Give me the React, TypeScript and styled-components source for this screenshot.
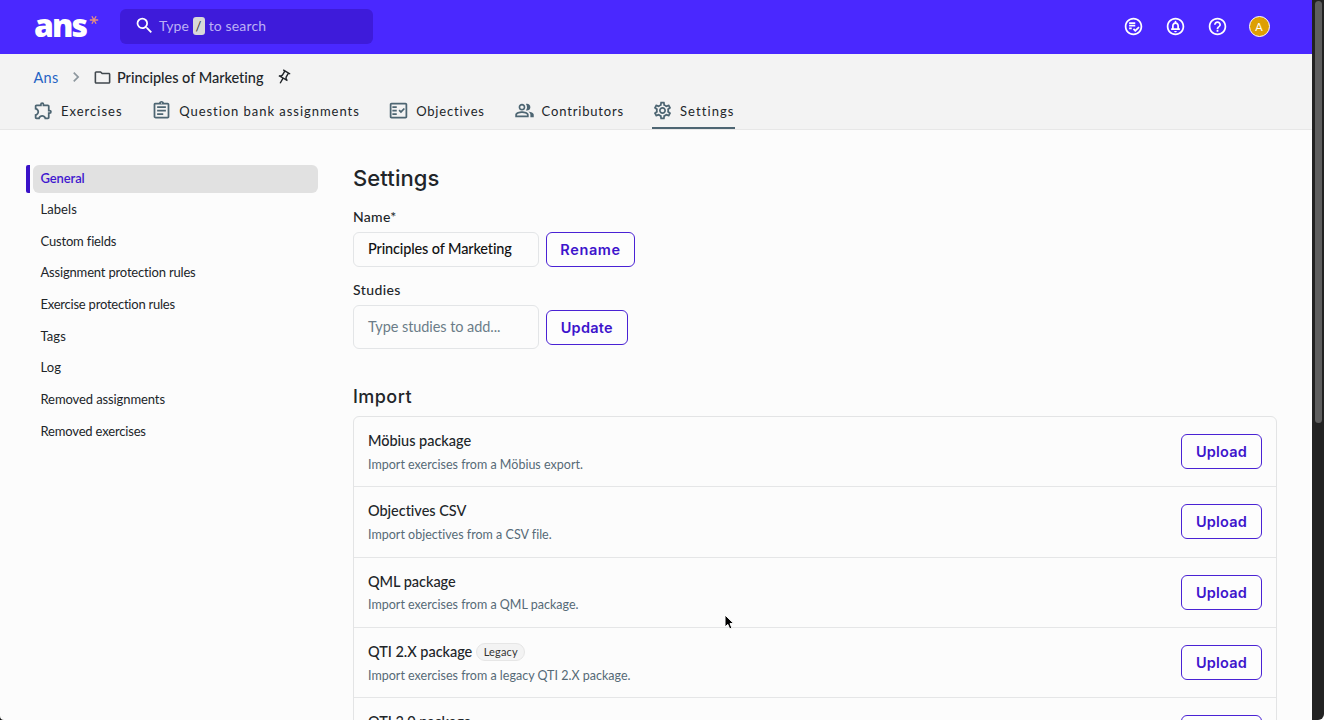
import styled, { createGlobalStyle } from 'styled-components';
import {
  MdSearch,
  MdOutlineFolder,
  MdChevronRight,
  MdOutlinePushPin,
  MdOutlineExtension,
  MdOutlineAssignment,
  MdOutlineFactCheck,
  MdOutlineSettings,
  MdOutlinePlaylistAddCheckCircle,
  MdOutlineCircleNotifications,
  MdHelpOutline,
} from 'react-icons/md';

const bodyFont = "Lato, 'Noto Sans', sans-serif";
const headingFont = "Inter, 'Liberation Sans', sans-serif";

const GlobalStyle = createGlobalStyle`
  *, *::before, *::after { box-sizing: border-box; }
  body {
    margin: 0;
    overflow: hidden;
    background: #fcfcfc;
    color: #212529;
    font-family: ${bodyFont};
    font-variant-ligatures: none;
    -webkit-font-smoothing: antialiased;
  }
  a { color: inherit; text-decoration: none; }
  h1, h2, h3, p { margin: 0; }
`;

const Window = styled.div`
  display: flex;
  position: relative;
  width: 1324px;
  height: 720px;
  overflow: hidden;
`;

const Page = styled.div`
  width: 1312px;
  height: 720px;
  overflow: hidden;
`;

const Scrollbar = styled.div`
  width: 12px;
  padding: 1px 2px 0 3px;
  background: #222;
  border-bottom-right-radius: 6px;
`;

const ScrollThumb = styled.div`
  height: 422px;
  border-radius: 4px;
  background: #5e5e5e;
`;

const TopBar = styled.header`
  display: flex;
  align-items: center;
  height: 54px;
  padding: 0 42.5px 1px 34px;
  background: #4a28ff;
`;

const Logo = styled.a`
  display: flex;
  width: 86px;
  height: 36px;
  color: #fff;
  font-family: 'Noto Sans', sans-serif;
  font-size: 32px;
  font-weight: 900;
  line-height: 31px;
  letter-spacing: -2px;
`;

const LogoStar = styled.svg`
  width: 10px;
  height: 10px;
  margin: 6px 0 0 3px;
  flex: none;
`;

const SearchBox = styled.div`
  display: flex;
  align-items: center;
  width: 253px;
  height: 35px;
  padding: 0 0 2px 14px;
  border-radius: 6px;
  background: #3e1bda;
  color: #bcb0f5;
  font-size: 14px;
  letter-spacing: 0.15px;

  svg { margin-right: 4px; color: #fff; }
`;

const SlashKey = styled.kbd`
  display: flex;
  align-items: center;
  justify-content: center;
  width: 12px;
  height: 18px;
  margin: 0 4px 0 3.5px;
  border-radius: 3px;
  background: #d8d8d8;
  color: #333;
  font-family: ${bodyFont};
  font-size: 13px;
`;

const Actions = styled.div`
  display: flex;
  align-items: center;
  gap: 21px;
  margin-left: auto;
  color: #fff;
`;

const Avatar = styled.span`
  display: flex;
  align-items: center;
  justify-content: center;
  width: 21px;
  height: 21px;
  border: 1.5px solid #fff;
  border-radius: 50%;
  background: #dd9f04;
  color: #fff;
  font-size: 11px;
`;

const SubHeader = styled.div`
  height: 76px;
  padding: 12px 33px 0;
  border-bottom: 1px solid #e7e7e7;
  background: #f3f3f3;
`;

const Breadcrumb = styled.div`
  display: flex;
  align-items: center;
  height: 22px;
  font-size: 14.5px;

  a { color: #2563c4; width: 33px; padding-left: 0.5px; letter-spacing: 0.25px; }
`;

const Crumb = styled.span`
  width: 158px;
  margin-left: 5px;
  font-weight: 500;
  letter-spacing: -0.02px;
`;

const Chevron = styled(MdChevronRight)`
  margin-right: 7px;
  color: #8d979e;
`;

const Folder = styled(MdOutlineFolder)`
  color: #40474d;
`;

const Pin = styled(MdOutlinePushPin)`
  transform: rotate(30deg);
`;

const Tabs = styled.nav`
  display: flex;
  height: 41px;
  gap: 29.4px;
`;

const Tab = styled.a<{ $active?: boolean; $track: number; $width: number }>`
  display: flex;
  align-items: center;
  gap: 7px;
  width: ${(p) => p.$width}px;
  padding-top: 6px;
  border-bottom: 2px solid ${(p) => (p.$active ? '#4d6572' : 'transparent')};
  font-size: 13px;
  white-space: nowrap;
  letter-spacing: ${(p) => p.$track}px;

  svg { flex: none; color: #4d6572; }
`;

const Content = styled.div`
  display: flex;
  padding: 34.5px 35px 0 26px;
`;

const SideNav = styled.nav`
  display: flex;
  flex-direction: column;
  gap: 3.65px;
  width: 327px;
`;

const NavRow = styled.div<{ $active?: boolean }>`
  display: flex;
  gap: 3px;
  height: 28px;

  &::before {
    content: '';
    width: 4px;
    border-radius: 2px 0 0 2px;
    background: ${(p) => (p.$active ? '#3a12c8' : 'transparent')};
  }
`;

const NavLink = styled.a<{ $active?: boolean; $track: number }>`
  width: 285px;
  padding-left: 7.5px;
  border-radius: 6px;
  background: ${(p) => (p.$active ? '#e1e1e1' : 'transparent')};
  color: ${(p) => (p.$active ? '#3f17cf' : '#212529')};
  font-size: 13px;
  font-weight: ${(p) => (p.$active ? 600 : 400)};
  line-height: 27.4px;
  letter-spacing: ${(p) => p.$track}px;
`;

const Main = styled.main`
  width: 924px;
`;

const Title = styled.h1`
  height: 43px;
  font-family: ${headingFont};
  font-size: 22px;
  font-weight: 500;
  line-height: 27px;
  letter-spacing: 0.1px;
`;

const Label = styled.label<{ $track: number }>`
  display: block;
  height: 24px;
  font-size: 14px;
  font-weight: 500;
  line-height: 18px;
  letter-spacing: ${(p) => p.$track}px;
`;

const FieldRow = styled.div<{ $gapBelow: number }>`
  display: flex;
  align-items: center;
  gap: 7px;
  margin-bottom: ${(p) => p.$gapBelow}px;
`;

const Field = styled.div<{ $height: number; $empty?: boolean }>`
  display: flex;
  align-items: center;
  width: 186px;
  height: ${(p) => p.$height}px;
  padding-left: 14px;
  border: 1px solid #e3e5e7;
  border-radius: 6px;
  color: ${(p) => (p.$empty ? '#6b7c88' : '#111')};
  font-size: 14.5px;
  font-weight: ${(p) => (p.$empty ? 400 : 500)};
  line-height: 16px;
  letter-spacing: ${(p) => (p.$empty ? -0.07 : -0.14)}px;
`;

const Button = styled.button<{ $width: number; $track: number }>`
  width: ${(p) => p.$width}px;
  height: 35px;
  padding: 0;
  border: 1px solid #4a22d4;
  border-radius: 6px;
  background: #fdfdfd;
  color: #3d14cc;
  font-family: ${headingFont};
  font-size: 14.5px;
  font-weight: 600;
  letter-spacing: ${(p) => p.$track}px;
`;

const SectionTitle = styled.h2`
  height: 32px;
  font-family: ${headingFont};
  font-size: 18px;
  font-weight: 500;
  line-height: 25px;
  letter-spacing: 0.45px;
`;

const Card = styled.section`
  border: 1px solid #e3e4e5;
  border-radius: 6px 6px 0 0;
`;

const PackageRow = styled.article`
  display: flex;
  align-items: center;
  justify-content: space-between;
  height: 70.3px;
  padding: 0 14px;
  border-bottom: 1px solid #e5e6e7;
`;

const PackageInfo = styled.div`
  padding-top: 2px;
`;

const PackageName = styled.h3`
  display: flex;
  align-items: center;
  gap: 4px;
  height: 22.4px;
  font-size: 14.5px;
  font-weight: 500;
  letter-spacing: -0.03px;
`;

const PackageNote = styled.p`
  height: 24px;
  color: #566a77;
  font-size: 12.5px;
  line-height: 25px;
  letter-spacing: 0.01px;
`;

const Badge = styled.span`
  display: flex;
  align-items: center;
  justify-content: center;
  width: 49px;
  height: 18px;
  border: 1px solid #e6e6e6;
  border-radius: 9px;
  background: #f3f3f3;
  color: #333;
  font-size: 11px;
  font-weight: 400;
  letter-spacing: 0.18px;
`;

const Pointer = styled.svg`
  position: absolute;
  left: 723px;
  top: 613px;
  width: 12px;
  height: 18px;
`;

const WindowCorner = styled.svg`
  position: absolute;
  left: 0;
  bottom: 0;
  width: 4px;
  height: 4px;
`;

function PeopleIcon({ size }: { size: number }) {
  return (
    <svg width={size} height={size} viewBox="-0.5 -0.5 25 25" fill="currentColor">
      <path d="M16.67 13.13C18.04 14.06 19 15.32 19 17v3h4v-3c0-2.18-3.57-3.47-6.33-3.87z" />
      <path d="M15 12c2.21 0 4-1.79 4-4s-1.79-4-4-4c-.47 0-.91.1-1.33.24C14.5 5.27 15 6.58 15 8s-.5 2.73-1.33 3.76c.42.14.86.24 1.33.24z" />
      <path d="M9 12c2.21 0 4-1.79 4-4s-1.79-4-4-4-4 1.79-4 4 1.79 4 4 4zm0-6c1.1 0 2 .9 2 2s-.9 2-2 2-2-.9-2-2 .9-2 2-2z" />
      <path d="M9 13c-2.67 0-8 1.34-8 4v3h16v-3c0-2.66-5.33-4-8-4zm6 5H3v-.99C3.2 16.29 6.3 15 9 15s5.8 1.29 6 2v1z" />
    </svg>
  );
}

const tabs = [
  { label: 'Exercises', Icon: MdOutlineExtension, track: 1.02, width: 88.8 },
  { label: 'Question bank assignments', Icon: MdOutlineAssignment, track: 0.96, width: 207.6 },
  { label: 'Objectives', Icon: MdOutlineFactCheck, track: 0.8, width: 96 },
  { label: 'Contributors', Icon: PeopleIcon, track: 0.83, width: 109 },
  { label: 'Settings', Icon: MdOutlineSettings, track: 1.08, width: 83 },
];

const sections = [
  { label: 'General', track: -0.1 },
  { label: 'Labels', track: 0.06 },
  { label: 'Custom fields', track: -0.17 },
  { label: 'Assignment protection rules', track: -0.18 },
  { label: 'Exercise protection rules', track: -0.23 },
  { label: 'Tags', track: 0.1 },
  { label: 'Log', track: 0.1 },
  { label: 'Removed assignments', track: -0.1 },
  { label: 'Removed exercises', track: -0.17 },
];

const packages = [
  { name: 'Möbius package', note: 'Import exercises from a Möbius export.' },
  { name: 'Objectives CSV', note: 'Import objectives from a CSV file.' },
  { name: 'QML package', note: 'Import exercises from a QML package.' },
  { name: 'QTI 2.X package', note: 'Import exercises from a legacy QTI 2.X package.', badge: 'Legacy' },
  { name: 'QTI 3.0 package', note: '' },
];

export default function App() {
  return (
    <Window>
      <GlobalStyle />
      <Page>
        <TopBar>
          <Logo>
            ans
            <LogoStar viewBox="0 0 10 10" stroke="#e58f80" strokeWidth="1.3" fill="none">
              <path d="M.8 5h8.4M2.9 1.2l4.2 7.6M7.1 1.2L2.9 8.8" />
            </LogoStar>
          </Logo>
          <SearchBox>
            <MdSearch size={21} />
            Type
            <SlashKey>/</SlashKey>
            to search
          </SearchBox>
          <Actions>
            <MdOutlinePlaylistAddCheckCircle size={21} />
            <MdOutlineCircleNotifications size={21} />
            <MdHelpOutline size={21} />
            <Avatar>A</Avatar>
          </Actions>
        </TopBar>
        <SubHeader>
          <Breadcrumb>
            <a>Ans</a>
            <Chevron size={20} />
            <Folder size={19} />
            <Crumb>Principles of Marketing</Crumb>
            <Pin size={17} />
          </Breadcrumb>
          <Tabs>
            {tabs.map(({ label, Icon, track, width }) => (
              <Tab key={label} $active={label === 'Settings'} $track={track} $width={width}>
                <Icon size={21} />
                {label}
              </Tab>
            ))}
          </Tabs>
        </SubHeader>
        <Content>
          <SideNav>
            {sections.map(({ label, track }) => (
              <NavRow key={label} $active={label === 'General'}>
                <NavLink $active={label === 'General'} $track={track}>{label}</NavLink>
              </NavRow>
            ))}
          </SideNav>
          <Main>
            <Title>Settings</Title>
            <Label $track={0.3}>Name*</Label>
            <FieldRow $gapBelow={14.5}>
              <Field $height={35}>Principles of Marketing</Field>
              <Button $width={89} $track={0.6}>Rename</Button>
            </FieldRow>
            <Label $track={0.4}>Studies</Label>
            <FieldRow $gapBelow={35}>
              <Field $height={44} $empty>Type studies to add...</Field>
              <Button $width={81.5} $track={0.25}>Update</Button>
            </FieldRow>
            <SectionTitle>Import</SectionTitle>
            <Card>
              {packages.map(({ name, note, badge }) => (
                <PackageRow key={name}>
                  <PackageInfo>
                    <PackageName>
                      {name}
                      {badge && <Badge>{badge}</Badge>}
                    </PackageName>
                    <PackageNote>{note}</PackageNote>
                  </PackageInfo>
                  <Button $width={81} $track={0.2}>Upload</Button>
                </PackageRow>
              ))}
            </Card>
          </Main>
        </Content>
      </Page>
      <Scrollbar>
        <ScrollThumb />
      </Scrollbar>
      <Pointer viewBox="0 0 12 18">
        <path
          d="M2 2v12l2.8-2.6 1.9 4.5 2.2-.9-1.9-4.4h3.8z"
          fill="#000"
          stroke="#fff"
          strokeWidth="1"
        />
      </Pointer>
      <WindowCorner viewBox="0 0 4 4">
        <path d="M0 0Q0 4 4 4H0z" fill="#111" />
      </WindowCorner>
    </Window>
  );
}
